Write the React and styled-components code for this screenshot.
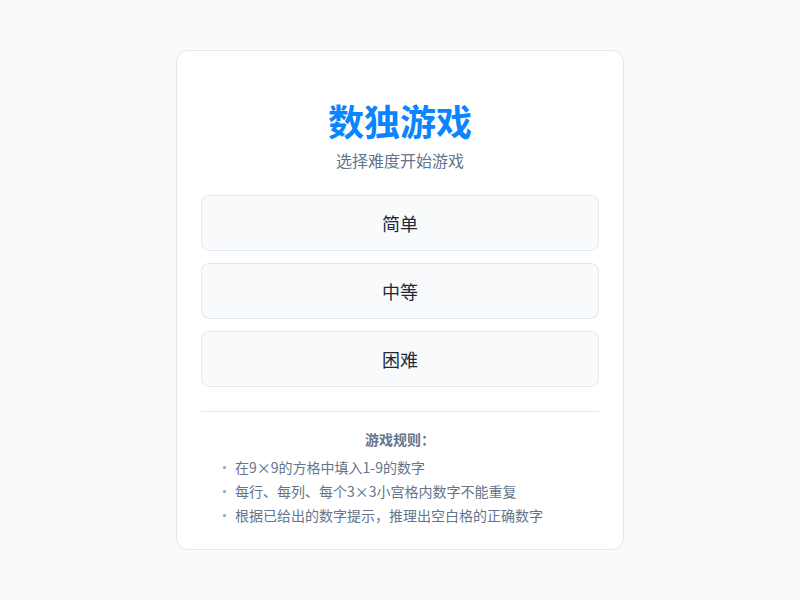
import React from 'react';
import styled, { createGlobalStyle } from 'styled-components';

const GlobalStyle = createGlobalStyle`
  html, body {
    margin: 0;
    padding: 0;
    background: #f8fafc;
    font-family: "Noto Sans CJK SC", "Noto Sans", sans-serif;
  }
`;

const Page = styled.div`
  min-height: 600px;
  display: flex;
  align-items: center;
  justify-content: center;
`;

const Card = styled.div`
  width: 448px;
  box-sizing: border-box;
  background: #fff;
  border: 1px solid #e2e8f0;
  border-radius: 12px;
  padding: 48px 24px 22px;
`;

const Title = styled.h1`
  margin: 0;
  text-align: center;
  font-size: 36px;
  line-height: 43px;
  font-weight: 700;
  color: #0a84ff;
`;

const Subtitle = styled.p`
  margin: 6px 0 23px;
  text-align: center;
  font-size: 16px;
  line-height: 24px;
  color: #64748b;
`;

const Levels = styled.div`
  display: flex;
  flex-direction: column;
  gap: 12px;
`;

const LevelButton = styled.button`
  height: 56px;
  border: 1px solid #e2e8f0;
  border-radius: 8px;
  background: #f8fafc;
  color: #1e293b;
  font-family: inherit;
  font-size: 18px;
  cursor: pointer;
`;

const Rules = styled.div`
  margin-top: 24px;
  border-top: 1px solid #e2e8f0;
  padding-top: 17px;
`;

const RulesTitle = styled.h3`
  margin: 0 0 5px;
  text-align: center;
  font-size: 14px;
  line-height: 21px;
  font-weight: 700;
  color: #64748b;
`;

const RuleList = styled.ul`
  list-style: none;
  margin: 0;
  padding: 0 0 0 22px;
`;

const Rule = styled.li`
  display: flex;
  align-items: center;
  font-size: 14px;
  line-height: 24px;
  color: #64748b;

  &::before {
    content: '';
    flex: 0 0 auto;
    width: 3px;
    height: 3px;
    border-radius: 50%;
    background: #94a3b8;
    margin-right: 9px;
  }
`;

const levels = ['简单', '中等', '困难'];

const rules = [
  '在9×9的方格中填入1-9的数字',
  '每行、每列、每个3×3小宫格内数字不能重复',
  '根据已给出的数字提示，推理出空白格的正确数字',
];

const App = () => (
  <Page>
    <GlobalStyle />
    <Card>
      <Title>数独游戏</Title>
      <Subtitle>选择难度开始游戏</Subtitle>
      <Levels>
        {levels.map((l) => (
          <LevelButton key={l}>{l}</LevelButton>
        ))}
      </Levels>
      <Rules>
        <RulesTitle>游戏规则：</RulesTitle>
        <RuleList>
          {rules.map((r) => (
            <Rule key={r}>{r}</Rule>
          ))}
        </RuleList>
      </Rules>
    </Card>
  </Page>
);

export default App;
